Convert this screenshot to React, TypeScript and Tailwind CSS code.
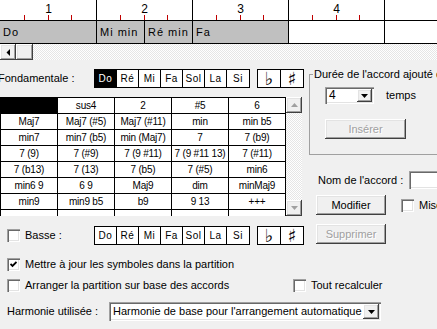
import React from "react";

const RAISED =
  "bg-[#f0f0f0] shadow-[inset_-1px_-1px_0_#404040,inset_1px_1px_0_#ffffff,inset_-2px_-2px_0_#a0a0a0,inset_2px_2px_0_#e3e3e3]";
const SUNKEN =
  "bg-white shadow-[inset_1px_1px_0_#a0a0a0,inset_2px_2px_0_#696969,inset_-1px_-1px_0_#ffffff,inset_-2px_-2px_0_#e3e3e3]";
const CHECKER =
  "bg-[repeating-conic-gradient(#e6e6e6_0%_25%,#ffffff_0%_50%)] bg-[length:2px_2px]";

function Arrow({ dir, color = "#000" }: { dir: "left" | "down" | "up"; color?: string }) {
  if (dir === "left")
    return (
      <svg width="4" height="7" viewBox="0 0 4 7">
        <polygon points="4,0 4,7 0.5,3.5" fill={color} />
      </svg>
    );
  if (dir === "down")
    return (
      <svg width="7" height="4" viewBox="0 0 7 4">
        <polygon points="0,0 7,0 3.5,4" fill={color} />
      </svg>
    );
  return (
    <svg width="7" height="4" viewBox="0 0 7 4">
      <polygon points="0,4 7,4 3.5,0" fill={color} />
    </svg>
  );
}

function Check({ checked }: { checked?: boolean }) {
  return (
    <div className={`w-[13px] h-[13px] shrink-0 flex items-center justify-center ${SUNKEN}`}>
      {checked && (
        <svg width="7" height="7" viewBox="0 0 7 7">
          <polyline points="0.5,3 2.5,5 6.5,1" fill="none" stroke="#000" strokeWidth="1.8" />
        </svg>
      )}
    </div>
  );
}

function Ruler() {
  const measures = [1, 2, 3, 4];
  return (
    <div className="flex h-[21px] border-b border-black bg-white">
      {measures.map((n, idx) => (
        <div
          key={n}
          className={`${idx === 0 ? "w-[97px] pl-[1px]" : "w-[96px]"} shrink-0 border-r border-black flex flex-col`}
        >
          <div className="h-[15px] flex items-center justify-center text-[12px] leading-none pt-[2px]">{n}</div>
          <div className="h-[5px] grid grid-cols-4">
            <div className="border-r border-[#c00000]" />
            <div className="border-r border-[#c00000]" />
            <div className="border-r border-[#c00000]" />
            <div />
          </div>
        </div>
      ))}
      <div className="flex-1" />
    </div>
  );
}

function ChordRow() {
  const cells = [
    { t: "Do", w: "w-[97px]", g: true },
    { t: "Mi min", w: "w-[48px]", g: true },
    { t: "Ré min", w: "w-[48px]", g: true },
    { t: "Fa", w: "w-[96px]", g: true },
    { t: "", w: "w-[96px]", g: false },
  ];
  return (
    <div className="flex h-[23px] border-b border-black bg-white">
      {cells.map((c, i) => (
        <div
          key={i}
          className={`${c.w} shrink-0 border-r border-black flex items-center pl-[3px] text-[11px] tracking-[1px] whitespace-nowrap ${
            c.g ? "bg-[#c0c0c0]" : "bg-white"
          }`}
        >
          {c.t}
        </div>
      ))}
      <div className="flex-1" />
    </div>
  );
}

function HScroll() {
  return (
    <div className="flex h-[16px]">
      <div className={`w-[16px] h-[16px] flex items-center justify-center ${RAISED}`}>
        <Arrow dir="left" />
      </div>
      <div className={`w-[17px] h-[16px] ${RAISED}`} />
      <div className={`flex-1 ${CHECKER}`} />
    </div>
  );
}

function NoteButtons({ selected }: { selected?: string }) {
  const notes = ["Do", "Ré", "Mi", "Fa", "Sol", "La", "Si"];
  return (
    <div className="flex items-center">
      <div className="flex border border-black divide-x divide-black bg-white h-[19px]">
        {notes.map((n) => (
          <div
            key={n}
            className={`w-[22px] flex items-center justify-center text-[10px] tracking-[0.5px] ${
              n === selected ? "bg-black text-white" : "bg-white text-black"
            }`}
          >
            {n}
          </div>
        ))}
      </div>
      <div className="ml-[7px] flex border border-black divide-x divide-black bg-white h-[19px] font-['DejaVu_Sans',sans-serif]">
        <div className="w-[23px] flex items-center justify-center text-[18px] leading-[17px]">♭</div>
        <div className="w-[22px] flex items-center justify-center text-[18px] leading-[17px] font-bold">♯</div>
      </div>
    </div>
  );
}

const HEADER = ["", "sus4", "2", "#5", "6"];
const ROWS = [
  ["Maj7", "Maj7 (#5)", "Maj7 (#11)", "min", "min b5"],
  ["min7", "min7 (b5)", "min (Maj7)", "7", "7 (b9)"],
  ["7 (9)", "7 (#9)", "7 (9 #11)", "7 (9 #11 13)", "7 (#11)"],
  ["7 (b13)", "7 (13)", "7 (b5)", "7 (#5)", "min6"],
  ["min6 9", "6 9", "Maj9", "dim", "minMaj9"],
  ["min9", "min9 b5", "b9", "9 13", "+++"],
  ["", "", "", "", ""],
];

function ChordTable() {
  return (
    <div className="w-[286px] shrink-0 border-l border-t border-black bg-white self-start">
      <div className="flex h-[16px]">
        {HEADER.map((h, i) => (
          <div
            key={i}
            className={`w-[57px] border-r border-b border-black flex items-center justify-center text-[10px] tracking-[-0.2px] leading-none ${
              i === 0 ? "bg-black" : "bg-white"
            }`}
          >
            {h}
          </div>
        ))}
      </div>
      {ROWS.map((r, ri) => (
        <div key={ri} className="flex h-[16px]">
          {r.map((c, ci) => (
            <div
              key={ci}
              className="w-[57px] border-r border-b border-black flex items-center justify-center text-[10px] tracking-[-0.2px] leading-none whitespace-nowrap"
            >
              {c}
            </div>
          ))}
        </div>
      ))}
    </div>
  );
}

function VScroll() {
  return (
    <div className="w-[16px] shrink-0 flex flex-col">
      <div className={`h-[16px] flex items-center justify-center ${RAISED}`}>
        <Arrow dir="up" color="#a0a0a0" />
      </div>
      <div className={`flex-1 ${CHECKER}`} />
      <div className={`h-[16px] flex items-center justify-center ${RAISED}`}>
        <Arrow dir="down" color="#a0a0a0" />
      </div>
    </div>
  );
}

function Button({ label, disabled, w }: { label: string; disabled?: boolean; w: string }) {
  return (
    <div
      className={`${w} h-[20px] flex items-center justify-center text-[11px] ${RAISED} ${
        disabled ? "text-[#a0a0a0] [text-shadow:1px_1px_0_#ffffff]" : "text-black"
      }`}
    >
      {label}
    </div>
  );
}

export default function App() {
  return (
    <div className="w-[437px] h-[329px] overflow-hidden bg-[#f0f0f0] text-black font-['Liberation_Sans',Arial,sans-serif] text-[11px] leading-[13px] select-none">
      <Ruler />
      <ChordRow />
      <HScroll />
      <div className="flex">
        <div className="w-[305px] shrink-0 pt-[9px]">
          <div className="flex items-center h-[19px]">
            <span className="w-[96px] -ml-[2px] shrink-0 whitespace-nowrap">Fondamentale :</span>
            <NoteButtons selected="Do" />
          </div>
          <div className="mt-[9px] flex h-[119px] overflow-hidden">
            <ChordTable />
            <VScroll />
          </div>
          <div className="mt-[10px] flex items-center h-[19px] pl-[7px]">
            <Check />
            <span className="ml-[5px] w-[69px] shrink-0">Basse :</span>
            <NoteButtons />
          </div>
        </div>
        <div className="w-[200px] shrink-0 pt-[8px]">
          <fieldset className="ml-[4px] w-[190px] border border-[#a0a0a0] pl-[3px] pb-[15px]">
            <legend className="px-[1px] whitespace-nowrap leading-[13px]">
              Durée de l'accord ajouté dans la partition
            </legend>
            <div className="ml-[12px] pt-[6px] flex items-center">
              <div className={`w-[49px] h-[17px] flex items-center justify-between pl-[4px] pr-[2px] ${SUNKEN}`}>
                <span className="text-[12px]">4</span>
                <div className={`w-[15px] h-[13px] flex items-center justify-center ${RAISED}`}>
                  <Arrow dir="down" />
                </div>
              </div>
              <span className="ml-[12px]">temps</span>
            </div>
            <div className="ml-[12px] mt-[15px]">
              <Button label="Insérer" disabled w="w-[81px]" />
            </div>
          </fieldset>
          <div className="ml-[13px] mt-[16px] flex items-center h-[18px]">
            <span className="w-[91px] shrink-0 whitespace-nowrap">Nom de l'accord :</span>
            <div className={`w-[80px] h-[18px] shrink-0 ${SUNKEN}`} />
          </div>
          <div className="ml-[11px] mt-[6px] flex items-center">
            <Button label="Modifier" w="w-[70px]" />
            <div className="ml-[15px] flex items-center">
              <Check />
              <span className="ml-[5px] whitespace-nowrap">Mise à jour</span>
            </div>
          </div>
          <div className="ml-[11px] mt-[9px]">
            <Button label="Supprimer" disabled w="w-[70px]" />
          </div>
        </div>
      </div>
      <div className="pl-[7px]">
        <div className="mt-[13px] flex items-center h-[13px]">
          <Check checked />
          <span className="ml-[5px] whitespace-nowrap">Mettre à jour les symboles dans la partition</span>
        </div>
        <div className="mt-[8px] flex items-center h-[13px]">
          <Check />
          <span className="ml-[5px] w-[268px] shrink-0 whitespace-nowrap">
            Arranger la partition sur base des accords
          </span>
          <Check />
          <span className="ml-[5px] whitespace-nowrap">Tout recalculer</span>
        </div>
        <div className="mt-[10px] flex items-center h-[19px]">
          <span className="w-[102px] shrink-0 whitespace-nowrap">Harmonie utilisée :</span>
          <div className={`w-[272px] h-[19px] flex items-center justify-between pl-[4px] pr-[2px] ${SUNKEN}`}>
            <span className="whitespace-nowrap">Harmonie de base pour l'arrangement automatique</span>
            <div className={`w-[16px] h-[15px] flex items-center justify-center ${RAISED}`}>
              <Arrow dir="down" />
            </div>
          </div>
        </div>
      </div>
    </div>
  );
}
